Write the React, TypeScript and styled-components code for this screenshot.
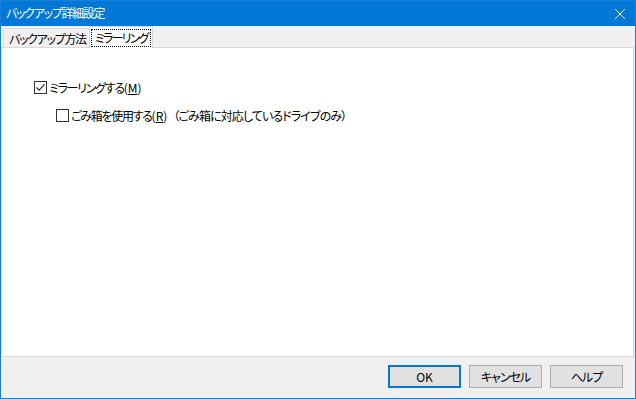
import React from "react";
import styled, { createGlobalStyle } from "styled-components";

const GlobalStyle = createGlobalStyle`
  html, body {
    margin: 0;
    padding: 0;
    background: #ffffff;
  }
  * {
    box-sizing: border-box;
  }
`;

const Frame = styled.div`
  width: 636px;
  height: 399px;
  border: 1px solid #1a7fd6;
  display: flex;
  flex-direction: column;
  background: #f0f0f0;
  font-family: "Noto Sans CJK JP", "Noto Sans", sans-serif;
  font-size: 12px;
  font-feature-settings: "palt";
  letter-spacing: -1.3px;
  color: #000000;
`;

const TitleBar = styled.div`
  height: 25px;
  background: #0078d7;
  display: flex;
  align-items: center;
  justify-content: space-between;
  padding: 0 9px 0 5px;
  color: #ffffff;
  font-size: 12px;
  letter-spacing: -1.3px;
`;

const Title = styled.span`
  line-height: 1;
  padding-bottom: 2px;
`;

const CloseButton = styled.span`
  display: flex;
  width: 12px;
  height: 12px;
`;

const Body = styled.div`
  flex: 1;
  display: flex;
  flex-direction: column;
`;

const TabRow = styled.div`
  height: 21px;
  display: flex;
  align-items: flex-end;
  padding-left: 2px;
  position: relative;
  z-index: 1;
`;

const Tab = styled.div<{ $active?: boolean }>`
  height: ${(p) => (p.$active ? "22px" : "19px")};
  margin-bottom: ${(p) => (p.$active ? "-1px" : "0")};
  padding: ${(p) => (p.$active ? "2px 1px" : "0 3px 0 5px")};
  background: ${(p) => (p.$active ? "#ffffff" : "#f0f0f0")};
  border: 1px solid #d9d9d9;
  border-bottom: none;
  border-left: ${(p) => (p.$active ? "none" : "1px solid #d9d9d9")};
  display: flex;
  align-items: center;
  white-space: nowrap;
`;

const FocusRing = styled.span`
  height: 18px;
  display: flex;
  align-items: center;
  padding: 0 2px 0 3px;
  border: 1px dotted #000000;
  letter-spacing: -1.8px;
`;

const Panel = styled.div`
  height: 310px;
  margin-right: 1px;
  background: #ffffff;
  border: 1px solid #d9d9d9;
  padding: 32px 0 0 32px;
  display: flex;
  flex-direction: column;
  gap: 14px;
`;

const CheckRow = styled.label<{ $indent?: number }>`
  display: flex;
  align-items: center;
  height: 14px;
  margin-left: ${(p) => p.$indent ?? 0}px;
  white-space: nowrap;
`;

const Box = styled.span`
  width: 13px;
  height: 13px;
  border: 1px solid #333333;
  background: #ffffff;
  margin-right: 2px;
  display: flex;
  align-items: center;
  justify-content: center;
  flex-shrink: 0;
`;

const Ascii = styled.span`
  letter-spacing: 0;
`;

const Key = styled.span`
  text-decoration: underline;
  text-underline-offset: 1px;
`;

const Note = styled.span`
  margin-left: 6px;
  letter-spacing: -0.9px;
`;

const ButtonBar = styled.div`
  flex: 1;
  display: flex;
  justify-content: flex-end;
  align-items: flex-start;
  padding: 8px 12px 0 0;
  gap: 8px;
`;

const Button = styled.button<{ $default?: boolean }>`
  width: 73px;
  height: 23px;
  background: #e1e1e1;
  border: ${(p) => (p.$default ? "2px solid #0078d7" : "1px solid #adadad")};
  font-family: inherit;
  font-size: 12px;
  font-feature-settings: "palt";
  letter-spacing: -1px;
  color: #000000;
  padding: 0;
  display: flex;
  align-items: center;
  justify-content: center;
`;

const Check = () => (
  <svg width="11" height="11" viewBox="0 0 11 11">
    <path d="M1.5 5.5 L4.2 8.2 L9.5 2.2" fill="none" stroke="#333333" strokeWidth="1.2" />
  </svg>
);

export default function App() {
  return (
    <>
      <GlobalStyle />
      <Frame>
        <TitleBar>
          <Title>バックアップ詳細設定</Title>
          <CloseButton>
            <svg width="12" height="12" viewBox="0 0 12 12">
              <path d="M1 1 L11 11 M11 1 L1 11" stroke="#ffffff" strokeWidth="1" />
            </svg>
          </CloseButton>
        </TitleBar>
        <Body>
          <TabRow>
            <Tab>バックアップ方法</Tab>
            <Tab $active>
              <FocusRing>ミラーリング</FocusRing>
            </Tab>
          </TabRow>
          <Panel>
            <CheckRow>
              <Box>
                <Check />
              </Box>
              ミラーリングする
              <Ascii>
                (<Key>M</Key>)
              </Ascii>
            </CheckRow>
            <CheckRow $indent={22}>
              <Box />
              ごみ箱を使用する
              <Ascii>
                (<Key>R</Key>)
              </Ascii>
              <Note>（ごみ箱に対応しているドライブのみ）</Note>
            </CheckRow>
          </Panel>
          <ButtonBar>
            <Button $default>
              <Ascii>OK</Ascii>
            </Button>
            <Button>キャンセル</Button>
            <Button>ヘルプ</Button>
          </ButtonBar>
        </Body>
      </Frame>
    </>
  );
}
